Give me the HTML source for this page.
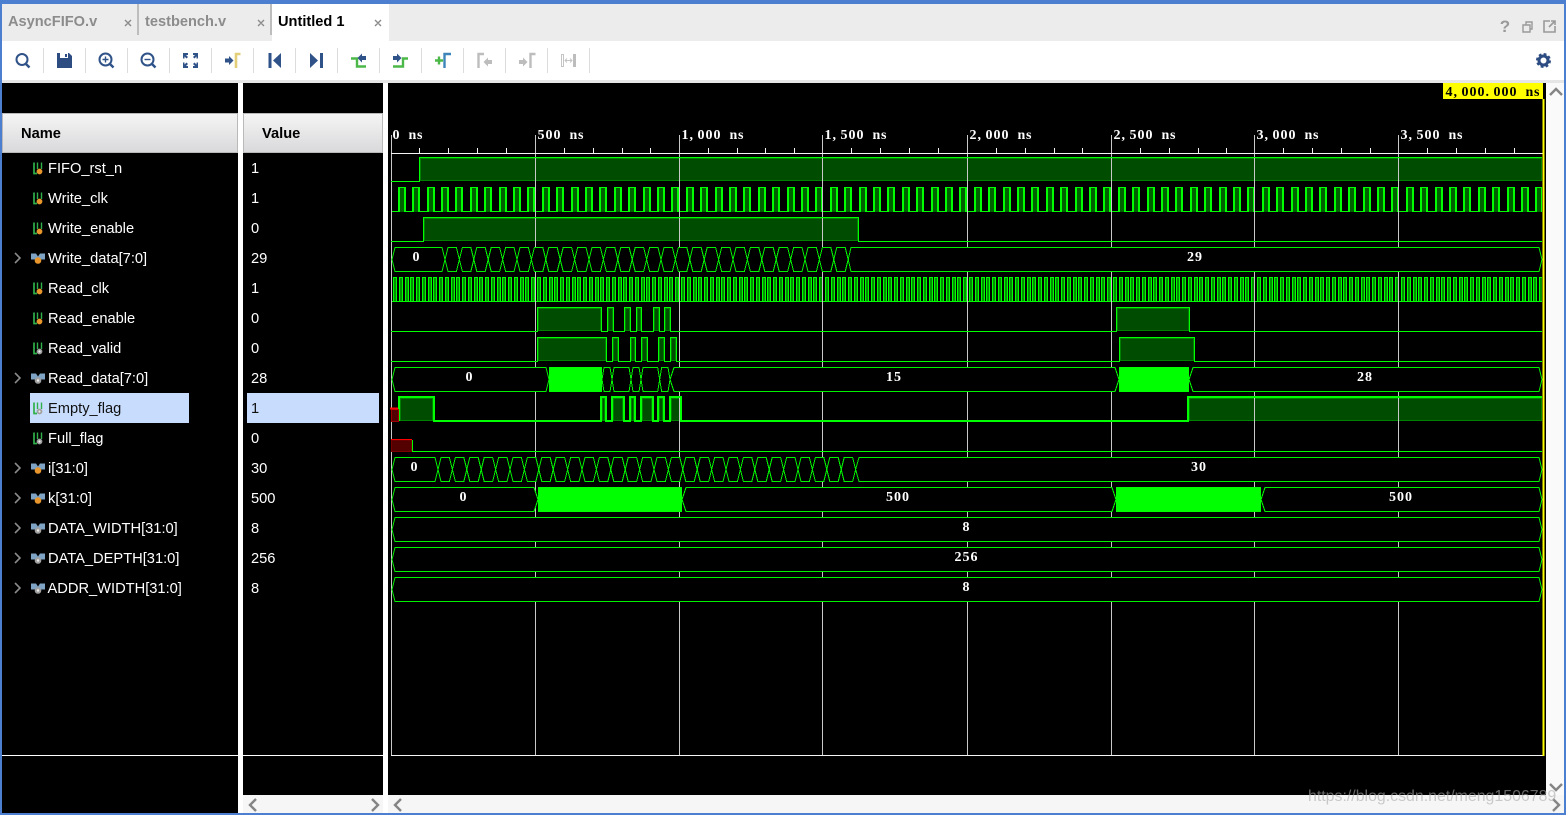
<!DOCTYPE html>
<html><head><meta charset="utf-8"><title>Untitled 1</title>
<style>
html,body{margin:0;padding:0;background:#fff}
#p{position:relative;width:1566px;height:815px;overflow:hidden;background:#fff;font-family:"Liberation Sans",sans-serif}
.a{position:absolute}
.tab{position:absolute;top:13px;font-weight:bold;font-size:14.6px;line-height:18px;color:#8c8c8c;white-space:nowrap}
.n,.v{position:absolute;font-size:14.67px;line-height:20px;color:#fff;white-space:nowrap}
.n{left:48px}.v{left:251px}
.h{position:absolute;top:113px;height:40px;box-sizing:border-box;border:1px solid #b9b9b9;background:linear-gradient(#f5f5f5,#d9d9db);font-weight:bold;font-size:14.67px;line-height:41px;color:#000}
svg{position:absolute;left:0;top:0}
svg text{white-space:pre}
.t{font-family:"Liberation Serif",serif;font-weight:bold;font-size:14px;fill:#fff}
.m{text-anchor:middle;letter-spacing:1px}
.f{fill:#004c00;stroke:#008000;stroke-width:1}
.w{fill:none;stroke:#0f0;stroke-width:1.3}
.b{fill:#000;stroke:#00f000;stroke-width:1}
.s{fill:#0f0}
</style></head>
<body><div id="p">
<div class="a" style="left:0;top:0;width:1566px;height:4px;background:#4d7fd1"></div>
<div class="a" style="left:2px;top:4px;width:1562px;height:37px;background:#ececec"></div>
<div class="a" style="left:137px;top:4px;width:2px;height:31px;background:#bdbdbd"></div>
<div class="a" style="left:270px;top:4px;width:2px;height:31px;background:#bdbdbd"></div>
<div class="a" style="left:272px;top:4px;width:117px;height:37px;background:#fff"></div>
<div class="tab" style="left:8px">AsyncFIFO.v</div>
<div class="tab" style="left:145px">testbench.v</div>
<div class="tab" style="left:278px;color:#000">Untitled 1</div>
<div class="a" style="left:2px;top:80px;width:1562px;height:3px;background:#e6e6e6"></div>

<div class="a" style="left:2px;top:83px;width:236px;height:730px;background:#000"></div>
<div class="a" style="left:243px;top:83px;width:140px;height:712px;background:#000"></div>
<div class="a" style="left:388px;top:83px;width:1158px;height:712px;background:#000"></div>
<div class="a" style="left:243px;top:795px;width:140px;height:18px;background:#f6f6f6"></div>
<div class="a" style="left:388px;top:795px;width:1176px;height:18px;background:#f6f6f6"></div>
<div class="a" style="left:1546px;top:83px;width:18px;height:712px;background:#fafafa"></div>
<div class="h" style="left:2px;width:236px;padding-left:18px">Name</div>
<div class="h" style="left:243px;width:140px;padding-left:18px">Value</div>
<div class="a" style="left:2px;top:755px;width:236px;height:1px;background:#fff"></div>
<div class="a" style="left:243px;top:755px;width:140px;height:1px;background:#fff"></div>
<div class="a" style="left:30px;top:393px;width:159px;height:30px;background:#c8dcfd"></div>
<div class="a" style="left:247px;top:393px;width:132px;height:30px;background:#c8dcfd"></div>

<div class="n" style="top:159px">FIFO_rst_n</div><div class="v" style="top:159px">1</div>
<div class="n" style="top:189px">Write_clk</div><div class="v" style="top:189px">1</div>
<div class="n" style="top:219px">Write_enable</div><div class="v" style="top:219px">0</div>
<div class="n" style="top:249px">Write_data[7:0]</div><div class="v" style="top:249px">29</div>
<div class="n" style="top:279px">Read_clk</div><div class="v" style="top:279px">1</div>
<div class="n" style="top:309px">Read_enable</div><div class="v" style="top:309px">0</div>
<div class="n" style="top:339px">Read_valid</div><div class="v" style="top:339px">0</div>
<div class="n" style="top:369px">Read_data[7:0]</div><div class="v" style="top:369px">28</div>
<div class="n" style="top:399px;color:#111">Empty_flag</div><div class="v" style="top:399px;color:#111">1</div>
<div class="n" style="top:429px">Full_flag</div><div class="v" style="top:429px">0</div>
<div class="n" style="top:459px">i[31:0]</div><div class="v" style="top:459px">30</div>
<div class="n" style="top:489px">k[31:0]</div><div class="v" style="top:489px">500</div>
<div class="n" style="top:519px">DATA_WIDTH[31:0]</div><div class="v" style="top:519px">8</div>
<div class="n" style="top:549px">DATA_DEPTH[31:0]</div><div class="v" style="top:549px">256</div>
<div class="n" style="top:579px;left:47.5px">ADDR_WIDTH[31:0]</div><div class="v" style="top:579px">8</div>

<svg width="1566" height="815" viewBox="0 0 1566 815">
<defs>
<path id="x" d="M0 0L3-12H11.4L14.4 0L11.4 12H3Z" class="b"/>
<g id="x2"><use href="#x"/><use href="#x" x="14.4"/></g>
<g id="x4"><use href="#x2"/><use href="#x2" x="28.8"/></g>
<g id="x8"><use href="#x4"/><use href="#x4" x="57.6"/></g>
<g id="x16"><use href="#x8"/><use href="#x8" x="115.2"/></g>
<pattern id="wclk" patternUnits="userSpaceOnUse" x="398" y="187" width="72" height="25">
<g shape-rendering="crispEdges">
<rect x="0" y="24" width="72" height="1" fill="#0f0"/>
<path fill="#0f0" d="M0 0h8v25h-8zM14 0h8v25h-8zM29 0h8v25h-8zM43 0h8v25h-8zM57 0h8v25h-8z"/>
<path fill="#006000" d="M2 1h4v24h-4zM16 1h4v24h-4zM31 1h4v24h-4zM45 1h4v24h-4zM59 1h4v24h-4z"/>
</g>
</pattern>
<pattern id="rclk" patternUnits="userSpaceOnUse" x="393" y="277" width="144" height="25">
<g shape-rendering="crispEdges">
<rect x="0" y="24" width="144" height="1" fill="#0f0"/>
<path fill="#0f0" d="M0 0h4v25h-4zM6 0h4v25h-4zM12 0h4v25h-4zM17 0h4v25h-4zM23 0h4v25h-4zM29 0h4v25h-4zM35 0h4v25h-4zM40 0h4v25h-4zM46 0h4v25h-4zM52 0h4v25h-4zM58 0h4v25h-4zM63 0h4v25h-4zM69 0h4v25h-4zM75 0h4v25h-4zM81 0h4v25h-4zM86 0h4v25h-4zM92 0h4v25h-4zM98 0h4v25h-4zM104 0h4v25h-4zM109 0h4v25h-4zM115 0h4v25h-4zM121 0h4v25h-4zM127 0h4v25h-4zM132 0h4v25h-4zM138 0h4v25h-4z"/>
<path fill="#009000" d="M1 1h2v23h-2zM7 1h2v23h-2zM13 1h2v23h-2zM18 1h2v23h-2zM24 1h2v23h-2zM30 1h2v23h-2zM36 1h2v23h-2zM41 1h2v23h-2zM47 1h2v23h-2zM53 1h2v23h-2zM59 1h2v23h-2zM64 1h2v23h-2zM70 1h2v23h-2zM76 1h2v23h-2zM82 1h2v23h-2zM87 1h2v23h-2zM93 1h2v23h-2zM99 1h2v23h-2zM105 1h2v23h-2zM110 1h2v23h-2zM116 1h2v23h-2zM122 1h2v23h-2zM128 1h2v23h-2zM133 1h2v23h-2zM139 1h2v23h-2z"/>
</g>
</pattern>
<g id="bo"><path d="M34-5.500V5.500H37" fill="none" stroke="#2fb04a" stroke-width="1.700"/><path d="M37.500-5.500V1M41.500-5.500V1" fill="none" stroke="#2fb04a" stroke-width="1.400"/><circle cx="39.500" cy="3.500" r="2.900" fill="#e8962c"/></g>
<g id="bg"><path d="M34-5.500V5.500H37" fill="none" stroke="#2fb04a" stroke-width="1.700"/><path d="M37.500-5.500V1M41.500-5.500V1" fill="none" stroke="#2fb04a" stroke-width="1.400"/><circle cx="39.500" cy="3.500" r="2.900" fill="#a0a0a0"/><circle cx="39.500" cy="3.500" r="1.100" fill="#eee"/></g>
<g id="so"><path d="M31-4.500H36L38-1.500L40-4.500H45V1.500H31Z" fill="#7ea3c4"/><circle cx="38" cy="2.500" r="3.300" fill="#e8962c"/></g>
<g id="sg"><path d="M31-4.500H36L38-1.500L40-4.500H45V1.500H31Z" fill="#7ea3c4"/><circle cx="38" cy="2.500" r="3.300" fill="#a0a0a0"/><circle cx="38" cy="2.500" r="1.200" fill="#eee"/></g>
</defs>

<!-- name icons -->
<use href="#bo" y="168"/><use href="#bo" y="198"/><use href="#bo" y="228"/><use href="#so" y="258"/><use href="#bo" y="288"/><use href="#bo" y="318"/><use href="#bg" y="348"/><use href="#sg" y="378"/><use href="#bg" y="408"/><use href="#bg" y="438"/><use href="#so" y="468"/><use href="#so" y="498"/><use href="#sg" y="528"/><use href="#sg" y="558"/><use href="#sg" y="588"/>
<path d="M15 253L20 258L15 263M15 373L20 378L15 383M15 463L20 468L15 473M15 493L20 498L15 503M15 523L20 528L15 533M15 553L20 558L15 563M15 583L20 588L15 593" fill="none" stroke="#8a8a8a" stroke-width="1.6"/>

<!-- close x -->
<path d="M125 20L131 26M131 20L125 26M258 20L264 26M264 20L258 26M375 20L381 26M381 20L375 26" stroke="#8a8a8a" stroke-width="1.4" fill="none"/>
<text x="1505" y="32" font-family="Liberation Sans" font-weight="bold" font-size="17" fill="#9a9a9a" text-anchor="middle">?</text>
<path d="M1523 25h7v7h-7zM1526 25v-3h6v7h-2" fill="none" stroke="#9a9a9a" stroke-width="1.4"/>
<path d="M1550 21h-6v11h11v-6M1549 27l6-6M1551 21h4v4" fill="none" stroke="#9a9a9a" stroke-width="1.6"/>

<!-- toolbar separators -->
<path d="M43.5 48V73M85.5 48V73M127.5 48V73M169.5 48V73M211.5 48V73M253.5 48V73M295.5 48V73M337.5 48V73M379.5 48V73M421.5 48V73M463.5 48V73M505.5 48V73M547.5 48V73M589.5 48V73" stroke="#dcdcdc" stroke-width="1"/>
<!-- toolbar icons -->
<g fill="none" stroke="#2f5288" stroke-width="2">
<circle cx="22" cy="59.5" r="5.5"/><path d="M26 64L29.5 67.5" stroke-width="2.4"/>
<circle cx="105.5" cy="59.5" r="6"/><path d="M110 64L113.5 67.5" stroke-width="2.4"/><path d="M102.5 59.5H108.5M105.500 56.500V62.500" stroke-width="1.4"/>
<circle cx="147.500" cy="59.500" r="6"/><path d="M152 64L155.500 67.500" stroke-width="2.400"/><path d="M144.500 59.500H150.500" stroke-width="1.400"/>
</g>
<path d="M57 53H69L72 56V68H57Z" fill="#2c4c82"/><rect x="60" y="53" width="8" height="5" fill="#fff"/><rect x="65" y="54" width="2" height="3" fill="#2c4c82"/>
<path d="M183 53h5v2l-2 0 2 2-1.500 1.500-2-2v2h-1.500zM198 53h-5v2l2 0-2 2 1.500 1.500 2-2v2h1.500zM183 68h5v-2l-2 0 2-2-1.500-1.500-2 2v-2h-1.500zM198 68h-5v-2l2 0-2-2 1.500-1.500 2 2v-2h1.500z" fill="#2f5288"/>
<path d="M225 58.500h4v-2.500l4.500 4.500-4.500 4.500v-2.500h-4z" fill="#2f5288"/><path d="M236 68V54H240.500" fill="none" stroke="#e3cf7a" stroke-width="2.600"/>
<path d="M268.500 53h3v15h-3zM281 53v15l-8-7.500z" fill="#2f5288"/>
<path d="M310 53v15l8-7.500zM320 53h3v15h-3z" fill="#2f5288"/>
<path d="M351 58.500H357V66.500H366" fill="none" stroke="#4cb848" stroke-width="2.400"/><path d="M366 56v4h-4v2.500l-4.500-4.500 4.500-4.500v2.500z" fill="#2f5288"/>
<path d="M393 66.500H403V58.500H408" fill="none" stroke="#4cb848" stroke-width="2.400"/><path d="M393 56v4h4v2.500l4.500-4.500-4.500-4.500v2.500z" fill="#2f5288"/>
<path d="M435 60.500h8M439 56.500v8" stroke="#4cb848" stroke-width="2.400" fill="none"/><path d="M444.500 68V54H451" fill="none" stroke="#3d85b8" stroke-width="2.400"/>
<path d="M478.500 68V54H484" fill="none" stroke="#bdbdbd" stroke-width="2.400"/><path d="M492 60v4h-4v2.500l-4.500-4.500 4.500-4.500v2.500z" fill="#bdbdbd"/>
<path d="M519 60v4h4v2.500l4.500-4.500-4.500-4.500v2.500z" fill="#bdbdbd"/><path d="M530.500 68V54H535.500" fill="none" stroke="#bdbdbd" stroke-width="2.400"/>
<path d="M561.500 54.500h2v12h-2z" fill="none" stroke="#c4c4c4"/><rect x="573" y="54" width="3" height="13" fill="#bdbdbd"/><path d="M565 60.500h7M567 58.500l-2 2 2 2M570 58.500l2 2-2 2" fill="none" stroke="#c4c4c4"/>
<circle cx="1543.500" cy="60.500" r="4.500" fill="none" stroke="#2c4c82" stroke-width="3"/><circle cx="1543.500" cy="60.500" r="6.500" fill="none" stroke="#2c4c82" stroke-width="2" stroke-dasharray="2.800 2.300"/>

<!-- scrollbar chevrons -->
<path d="M1550 95L1556 89L1562 95M1550 784L1556 790L1562 784M1553 799L1559 805L1553 811M256 799L250 805L256 811M372 799L378 805L372 811M401 799L395 805L401 811" fill="none" stroke="#858585" stroke-width="2.400"/>

<g shape-rendering="crispEdges">
<!-- dark fills -->
<rect class="f" x="420.500" y="158.500" width="1121" height="22"/>
<rect class="f" x="424.500" y="218.500" width="433" height="22"/>
<rect class="f" x="538.500" y="308.500" width="62" height="22"/><rect class="f" x="608.500" y="308.500" width="4" height="22"/><rect class="f" x="625.500" y="308.500" width="4" height="22"/><rect class="f" x="637.500" y="308.500" width="3" height="22"/><rect class="f" x="654.500" y="308.500" width="4" height="22"/><rect class="f" x="665.500" y="308.500" width="4" height="22"/><rect class="f" x="1117.500" y="308.500" width="71" height="22"/>
<rect class="f" x="538.500" y="338.500" width="67" height="22"/><rect class="f" x="613.500" y="338.500" width="4" height="22"/><rect class="f" x="631.500" y="338.500" width="3" height="22"/><rect class="f" x="642.500" y="338.500" width="4" height="22"/><rect class="f" x="659.500" y="338.500" width="4" height="22"/><rect class="f" x="671.500" y="338.500" width="4" height="22"/><rect class="f" x="1120.500" y="338.500" width="73" height="22"/>
<rect class="f" x="400.500" y="398.500" width="32" height="22"/><rect class="f" x="602.500" y="398.500" width="2" height="22"/><rect class="f" x="613.500" y="398.500" width="9" height="22"/><rect class="f" x="631.500" y="398.500" width="2" height="22"/><rect class="f" x="642.500" y="398.500" width="9" height="22"/><rect class="f" x="659.500" y="398.500" width="3" height="22"/><rect class="f" x="671.500" y="398.500" width="8" height="22"/><rect class="f" x="1189.500" y="398.500" width="352" height="22"/>

<!-- clocks -->
<path d="M391 211.500H398M391 301.500H393" stroke="#0f0" stroke-width="1"/>
<rect x="398" y="187" width="1144" height="25" fill="url(#wclk)"/>
<rect x="393" y="277" width="1149" height="25" fill="url(#rclk)"/>

<!-- grid -->
<path d="M391.500 135V755M535.500 135V755M679.500 135V755M822.500 135V755M967.500 135V755M1111.500 135V755M1254.500 135V755M1398.500 135V755" stroke="#c8c8c8" stroke-width="1"/>
<path d="M391 755.500H1543M391 153.500H1543" stroke="#f4f4f4" stroke-width="1"/>
<path d="M419.500 148V153M448.500 148V153M477.500 148V153M506.500 148V153M564.500 148V153M593.500 148V153M622.500 148V153M650.500 148V153M708.500 148V153M737.500 148V153M765.500 148V153M794.500 148V153M851.500 148V153M880.500 148V153M909.500 148V153M938.500 148V153M996.500 148V153M1025.500 148V153M1054.500 148V153M1082.500 148V153M1140.500 148V153M1169.500 148V153M1198.500 148V153M1226.500 148V153M1283.500 148V153M1312.500 148V153M1341.500 148V153M1370.500 148V153M1427.500 148V153M1456.500 148V153M1485.500 148V153M1514.500 148V153" stroke="#f4f4f4" stroke-width="1"/>

<!-- outlines -->
<path class="w" d="M391 181.500H419.500V157.500H1542"/>
<path class="w" d="M391 241.500H423.500V217.500H858.500V241.500H1542"/>
<path class="w" d="M391 331.500H537.500V307.500H601.500V331.500H607.500V307.500H613.500V331.500H624.500V307.500H630.500V331.500H636.500V307.500H641.500V331.500H653.500V307.500H659.500V331.500H664.500V307.500H670.500V331.500H1116.500V307.500H1189.500V331.500H1542"/>
<path class="w" d="M391 361.500H537.500V337.500H606.500V361.500H612.500V337.500H618.500V361.500H630.500V337.500H635.500V361.500H641.500V337.500H647.500V361.500H658.500V337.500H664.500V361.500H670.500V337.500H676.500V361.500H1119.500V337.500H1194.500V361.500H1542"/>
<path d="M399 421V397H434V421H601V397H606V421H612V397H624V421H630V397H635V421H641V397H653V421H658V397H664V421H670V397H681V421H1188V397H1542" fill="none" stroke="#0f0" stroke-width="2.400"/>
<path class="w" d="M412.500 440V451.500H1542"/>
<rect x="391.500" y="409.500" width="7" height="12" fill="#500" stroke="#a00000"/><path d="M390 408.500H398" stroke="#f00" stroke-width="2"/>
<rect x="391.500" y="440" width="20" height="11.500" fill="#500" stroke="#7a0000"/><path d="M391 439.500H412" stroke="#f00" stroke-width="1"/>

<!-- buses -->
<path class="b" d="M392 259.500L395 247.500H442L445 259.500L442 271.500H395Z"/>
<g transform="translate(445 259.500)"><use href="#x16"/><use href="#x8" x="230.400"/><use href="#x4" x="345.600"/></g>
<path class="b" d="M848.200 259.500L851 247.500H1539L1542 259.500L1539 271.500H851Z"/>

<path class="b" d="M392 379.500L395 367.500H546L549 379.500L546 391.500H395Z"/>
<path class="b" d="M602 379.500L604 367.500H610L612 379.500L610 391.500H604Z M612 379.500L614 367.500H629L631 379.500L629 391.500H614Z M631 379.500L633 367.500H639L641 379.500L639 391.500H633Z M641 379.500L643 367.500H657.700L659.700 379.500L657.700 391.500H643Z M659.700 379.500L661.700 367.500H668L670 379.500L668 391.500H661.700Z"/>
<path class="b" d="M670 379.500L674 367.500H1115L1119 379.500L1115 391.500H674Z"/>
<path class="b" d="M1189 379.500L1193 367.500H1539L1542 379.500L1539 391.500H1193Z"/>
<rect class="s" x="549" y="367" width="53" height="25"/><rect class="s" x="1119" y="367" width="70" height="25"/>

<path class="b" d="M392 469.500L395 457.500H435L438 469.500L435 481.500H395Z"/>
<g transform="translate(438 469.500)"><use href="#x16"/><use href="#x8" x="230.400"/><use href="#x4" x="345.600"/><use href="#x" x="403.200"/></g>
<path class="b" d="M855.600 469.500L859 457.500H1539L1542 469.500L1539 481.500H859Z"/>

<path class="b" d="M392 499.500L395 487.500H534L538 499.500L534 511.500H395Z"/>
<path class="b" d="M682 499.500L686 487.500H1112L1116 499.500L1112 511.500H686Z"/>
<path class="b" d="M1261 499.500L1265 487.500H1539L1542 499.500L1539 511.500H1265Z"/>
<rect class="s" x="538" y="487" width="144" height="25"/><rect class="s" x="1116" y="487" width="145" height="25"/>

<path class="b" d="M392 529.500L395 517.500H1539L1542 529.500L1539 541.500H395Z"/>
<path class="b" d="M392 559.500L395 547.500H1539L1542 559.500L1539 571.500H395Z"/>
<path class="b" d="M392 589.500L395 577.500H1539L1542 589.500L1539 601.500H395Z"/>

<!-- cursor & marker -->
<rect x="1542.500" y="99" width="2" height="657" fill="#ff0"/>
<rect x="1443" y="83" width="100" height="16" fill="#ff0"/>
</g>
<text class="t" x="1445.500 1453.500 1461.500 1469.500 1477.500 1485.500 1493.500 1501.500 1509.500 1517.500 1525.500 1534" y="96" style="fill:#000">4,000.000 ns</text>
<text class="t" x="392.500 400.500 408.500 417" y="139">0 ns</text>
<text class="t" x="537.500 545.500 553.500 561.500 569.500 578" y="139">500 ns</text>
<text class="t" x="681.500 689.500 697.500 705.500 713.500 721.500 729.500 738" y="139">1,000 ns</text>
<text class="t" x="824.500 832.500 840.500 848.500 856.500 864.500 872.500 881" y="139">1,500 ns</text>
<text class="t" x="969.500 977.500 985.500 993.500 1001.500 1009.500 1017.500 1026" y="139">2,000 ns</text>
<text class="t" x="1113.500 1121.500 1129.500 1137.500 1145.500 1153.500 1161.500 1170" y="139">2,500 ns</text>
<text class="t" x="1256.500 1264.500 1272.500 1280.500 1288.500 1296.500 1304.500 1313" y="139">3,000 ns</text>
<text class="t" x="1400.500 1408.500 1416.500 1424.500 1432.500 1440.500 1448.500 1457" y="139">3,500 ns</text>
<text class="t m" x="416.500" y="261">0</text><text class="t m" x="1195" y="261">29</text>
<text class="t m" x="469.500" y="381">0</text><text class="t m" x="894" y="381">15</text><text class="t m" x="1365" y="381">28</text>
<text class="t m" x="414.500" y="471">0</text><text class="t m" x="1199" y="471">30</text>
<text class="t m" x="463.500" y="501">0</text><text class="t m" x="898" y="501">500</text><text class="t m" x="1401" y="501">500</text>
<text class="t m" x="966.500" y="531">8</text><text class="t m" x="966.500" y="561">256</text><text class="t m" x="966.500" y="591">8</text>
</svg>

<div class="a" style="left:0;top:4px;width:2px;height:811px;background:#4d7fd1"></div>
<div class="a" style="left:1564px;top:4px;width:2px;height:811px;background:#4d7fd1"></div>
<div class="a" style="left:0;top:813px;width:1566px;height:2px;background:#4d7fd1"></div>
<div class="a" style="left:1308px;top:786px;font-size:15.9px;line-height:22px;color:rgba(170,170,170,.6);white-space:nowrap">https://blog.csdn.net/meng1506789</div>
</div></body></html>
